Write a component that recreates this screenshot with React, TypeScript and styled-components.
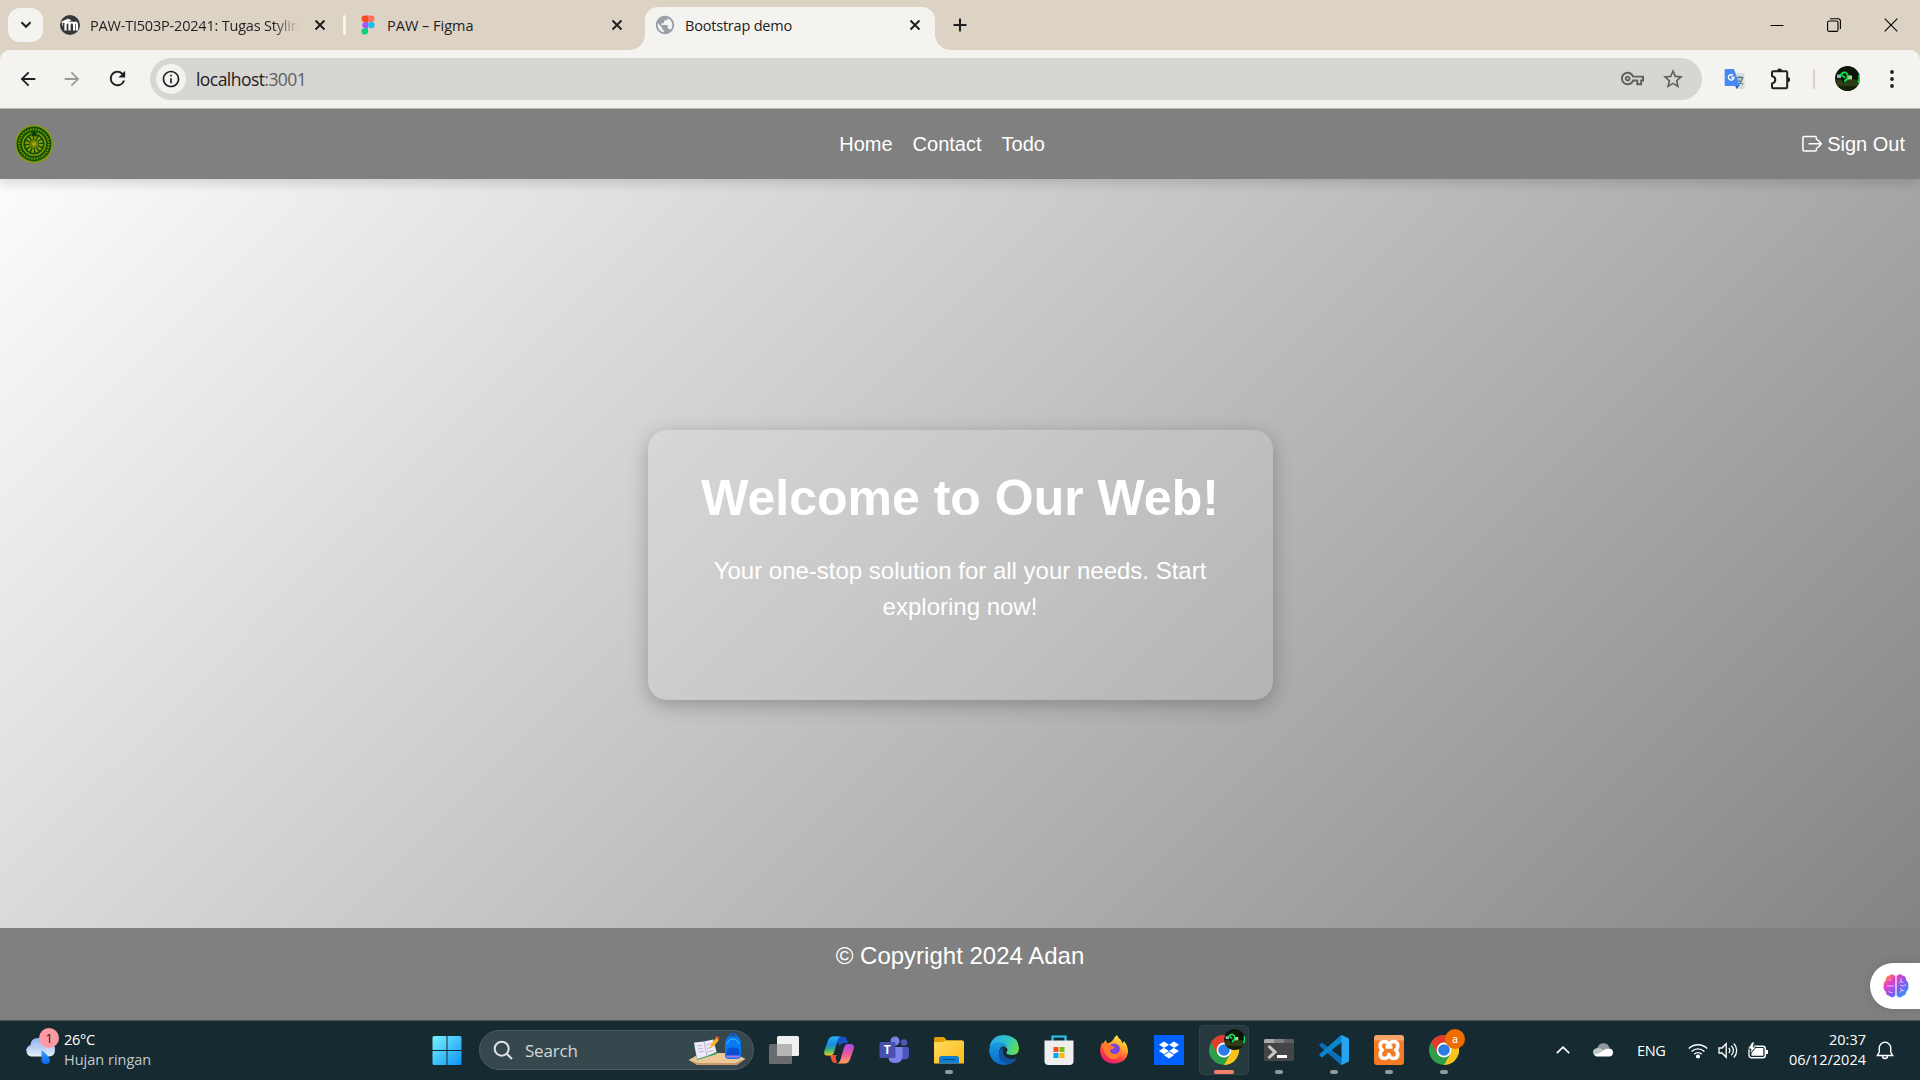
import React from "react";
import styled, { createGlobalStyle } from "styled-components";
import {
  MdArrowBack,
  MdArrowForward,
  MdRefresh,
  MdInfoOutline,
  MdStarOutline,
  MdPublic,
  MdOutlineVpnKey,
} from "react-icons/md";
import { FaDropbox } from "react-icons/fa";

const Global = createGlobalStyle`
  *, *::before, *::after { box-sizing: border-box; }
  body { margin: 0; overflow: hidden; }
  svg { display: block; flex: none; }
`;

const uiFont = `"Segoe UI", "Open Sans", "Noto Sans", sans-serif`;
const pageFont = `Arial, "Liberation Sans", sans-serif`;

const Screen = styled.div`
  width: 1920px;
  height: 1080px;
  display: flex;
  flex-direction: column;
  overflow: hidden;
  background: #ddd3c4;
`;

/* ---------- browser tabs ---------- */
const TabStrip = styled.header`
  height: 50px;
  flex: none;
  display: flex;
  font-family: ${uiFont};
  color: #1f2023;
`;
const TabSearch = styled.button`
  width: 35px;
  height: 34px;
  margin: 8px 2px 0 8px;
  padding: 0;
  border: 0;
  border-radius: 12px;
  background: #f5f3ef;
  display: grid;
  place-items: center;
`;
const Tab = styled.div<{
  $width: number;
  $left: number;
  $right: number;
  $gap: number;
  $active?: boolean;
}>`
  position: relative;
  width: ${(p) => p.$width}px;
  flex: none;
  height: 43px;
  margin-top: 7px;
  padding: 0 ${(p) => p.$right}px 7px ${(p) => p.$left}px;
  display: flex;
  align-items: center;
  gap: ${(p) => p.$gap}px;
  border-radius: 13px 13px 0 0;
  background: ${(p) => (p.$active ? "#f5f3ef" : "transparent")};
  &::before,
  &::after {
    content: "";
    display: ${(p) => (p.$active ? "block" : "none")};
    position: absolute;
    bottom: 0;
    width: 15px;
    height: 15px;
  }
  &::before {
    right: 100%;
    background: radial-gradient(circle at 0 0, transparent 14.5px, #f5f3ef 15px);
  }
  &::after {
    left: 100%;
    background: radial-gradient(circle at 100% 0, transparent 14.5px, #f5f3ef 15px);
  }
`;
const TabTitle = styled.span<{ $fade?: boolean; $spacing: number }>`
  flex: 1;
  overflow: hidden;
  white-space: nowrap;
  font-size: 14.5px;
  line-height: 20px;
  padding-top: 1px;
  letter-spacing: ${(p) => p.$spacing}px;
  ${(p) =>
    p.$fade &&
    "margin-right: 5px; mask-image: linear-gradient(90deg, #000 88%, transparent 100%);"}
`;
const TabDivider = styled.i`
  width: 3px;
  height: 20px;
  margin-top: 15px;
  margin-left: -2px;
  border-radius: 2px;
  background: #f5f3ef;
`;
const NewTab = styled.span`
  width: 50px;
  display: grid;
  place-items: center;
`;
const WindowControls = styled.div`
  margin-left: auto;
  margin-right: 1px;
  display: flex;
`;
const WindowButton = styled.span`
  width: 57px;
  height: 49px;
  display: grid;
  place-items: center;
`;

/* ---------- toolbar ---------- */
const Toolbar = styled.div`
  height: 59px;
  flex: none;
  display: flex;
  align-items: center;
  padding: 0 0 1px 10px;
  background: #f5f3ef;
  border-bottom: 1px solid #b7bfb3;
  border-radius: 10px 10px 0 0;
  color: #1f2023;
`;
const ToolButton = styled.span<{ $width: number; $muted?: boolean }>`
  width: ${(p) => p.$width}px;
  flex: none;
  display: grid;
  place-items: center;
  color: ${(p) => (p.$muted ? "#9b9a99" : "inherit")};
`;
const Omnibox = styled.div`
  width: 1552px;
  height: 42px;
  flex: none;
  margin-left: 14px;
  padding: 0 17px 0 6px;
  display: flex;
  align-items: center;
  border-radius: 21px;
  background: #d8d6d2;
  font-family: ${uiFont};
  color: #5f5f5f;
`;
const SiteInfo = styled.span`
  width: 30px;
  height: 30px;
  border-radius: 50%;
  background: #f5f3ef;
  color: #1f2023;
  display: grid;
  place-items: center;
`;
const Address = styled.span`
  flex: 1;
  margin-left: 10px;
  font-size: 17.5px;
  letter-spacing: -0.55px;
  color: #5f6064;
  b {
    font-weight: 400;
    color: #1f2023;
  }
`;
const OmniIcons = styled.span`
  display: flex;
  align-items: center;
  gap: 17px;
`;
const ToolDivider = styled.i`
  width: 2px;
  height: 20px;
  flex: none;
  margin: 0 20px 0 19px;
  background: #ddd3c4;
`;

/* ---------- web page ---------- */
const Page = styled.main`
  height: 911px;
  flex: none;
  display: flex;
  flex-direction: column;
  font-family: ${pageFont};
  color: #fff;
  position: relative;
  background: linear-gradient(135deg, #fff, #808080);
`;
const Navbar = styled.nav`
  height: 70px;
  flex: none;
  padding: 0 15px;
  display: flex;
  align-items: center;
  justify-content: space-between;
  background: #808080;
  box-shadow: 0 5px 10px rgba(0, 0, 0, 0.13);
  z-index: 1;
  font-size: 20px;
`;
const Brand = styled.a`
  width: 68px;
`;
const NavLinks = styled.div`
  display: flex;
  gap: 20px;
`;
const SignOut = styled.a`
  display: flex;
  align-items: center;
  gap: 5px;
`;
const Hero = styled.section`
  flex: 1;
  display: flex;
  align-items: center;
  justify-content: center;
  padding-top: 23px;
`;
const Card = styled.div`
  width: 625px;
  height: 270px;
  padding: 37.5px;
  border-radius: 19px;
  background: rgba(255, 255, 255, 0.1);
  box-shadow: 0 5px 19px rgba(0, 0, 0, 0.25);
  text-align: center;
`;
const Title = styled.h1`
  margin: 0 0 25px;
  font-size: 50px;
  line-height: 60px;
  white-space: nowrap;
`;
const Lead = styled.p`
  margin: 0;
  font-size: 24px;
  line-height: 36px;
`;
const Footer = styled.footer`
  height: 92px;
  flex: none;
  padding-top: 10px;
  text-align: center;
  font-size: 24px;
  line-height: 36px;
  background: #808080;
`;
const Assistant = styled.div`
  position: absolute;
  right: 0;
  bottom: 11px;
  width: 50px;
  height: 46px;
  padding-left: 13px;
  display: flex;
  align-items: center;
  border-radius: 23px 0 0 23px;
  background: #fff;
  box-shadow: 0 0 12px rgba(0, 0, 0, 0.12);
`;

/* ---------- taskbar ---------- */
const Taskbar = styled.footer`
  height: 60px;
  flex: none;
  display: flex;
  align-items: center;
  background: #152b31;
  box-shadow: inset 0 1px #43565a;
  font-family: ${uiFont};
  color: #fff;
`;
const Weather = styled.div`
  width: 422px;
  padding-left: 24px;
  display: flex;
  align-items: center;
  gap: 5px;
  font-size: 14.5px;
  line-height: 20px;
`;
const WeatherText = styled.div`
  letter-spacing: -0.3px;
  span {
    display: block;
  }
  span + span {
    color: #c3cacc;
    letter-spacing: 0;
  }
`;
const Apps = styled.div`
  display: flex;
  align-items: center;
  gap: 5px;
`;
const AppCell = styled.span<{ $active?: boolean }>`
  width: 50px;
  height: 50px;
  position: relative;
  display: grid;
  place-items: center;
  border-radius: 5px;
  background: ${(p) => (p.$active ? "#26393f" : "transparent")};
  box-shadow: ${(p) => (p.$active ? "inset 0 0 0 1px #31444a" : "none")};
`;
const Running = styled.i<{ $active?: boolean }>`
  position: absolute;
  bottom: 1px;
  left: 50%;
  width: ${(p) => (p.$active ? 20 : 8)}px;
  height: 4px;
  transform: translateX(-50%);
  border-radius: 2px;
  background: ${(p) => (p.$active ? "#f4836a" : "#8f9a9d")};
`;
const Search = styled.div`
  width: 275px;
  height: 40px;
  margin: 0 0 0 2px;
  padding: 0 7px 0 13px;
  display: flex;
  align-items: center;
  border: 1px solid #4c5c61;
  border-radius: 20px;
  background: #36484e;
  font-size: 17px;
  letter-spacing: -0.2px;
  color: #d3d8d9;
  span {
    flex: 1;
    margin-left: 12px;
  }
`;
const Tray = styled.div`
  margin-left: auto;
  padding-right: 26px;
  display: flex;
  align-items: center;
  > svg:first-child {
    margin-right: 23px;
  }
`;
const Language = styled.span`
  width: 29px;
  margin: 0 22px 0 24px;
  font-size: 14.5px;
  letter-spacing: -0.3px;
`;
const TrayStatus = styled.span`
  display: flex;
  gap: 10px;
`;
const Clock = styled.time`
  width: 98px;
  margin-right: 10px;
  text-align: right;
  font-size: 14.5px;
  line-height: 20px;
  span {
    display: block;
  }
`;

/* ---------- drawings ---------- */
const Cross = () => (
  <svg width="12" height="12" viewBox="0 0 12 12">
    <path d="M1.500 1.500l9 9M10.500 1.500l-9 9" stroke="#1f2023" strokeWidth="2" />
  </svg>
);
const MoodleIcon = () => (
  <svg width="20" height="20" viewBox="0 0 20 20">
    <circle cx="10" cy="10" r="10" fill="#373738" />
    <path d="M5.500 15.500V10q0-2.500 2-2.500t2 2.500v5.500M9.500 10q0-2.500 2.300-2.500t2.300 2.500v5.500M14 10q0-2.500 1.500-2.500t1.500 2.500v5.500" fill="none" stroke="#fff" strokeWidth="2.200" />
    <path d="M1.500 7L8 4l3 1.500L5 8zM2.500 7v4" fill="#fff" stroke="#fff" strokeWidth=".7" />
  </svg>
);
const FigmaIcon = () => (
  <svg width="14" height="20" viewBox="0 0 14 20">
    <path d="M7 .5H3.700a3.200 3.200 0 000 6.400H7z" fill="#f24e1e" />
    <path d="M7 .5h3.300a3.200 3.200 0 010 6.400H7z" fill="#ff7262" />
    <path d="M7 6.900H3.700a3.200 3.200 0 000 6.300H7z" fill="#a259ff" />
    <circle cx="10.300" cy="10" r="3.200" fill="#1abcfe" />
    <path d="M3.700 13.200H7v3.100a3.300 3.200 0 11-3.300-3.100z" fill="#0acf83" />
  </svg>
);
const TranslateIcon = () => (
  <svg width="22" height="22" viewBox="0 0 22 22">
    <path d="M8 5h12.500v16H12z" fill="#dcdcdc" />
    <path d="M12.500 9.500h7M16 8v1.500M18.500 9.500q-1 5-5 7.500M14.500 11.500q1.500 3.500 4.500 5" stroke="#5d7f8a" strokeWidth="1.300" fill="none" />
    <path d="M11 17h5l-3.500 4z" fill="#2557c9" />
    <path d="M1.500 1H10l5.800 17H1.500Q.7 18 .7 17V2Q.7 1 1.500 1z" fill="#4688f4" />
    <path d="M9 7.400A2.700 2.700 0 109.800 9.600H7.300" fill="none" stroke="#fff" strokeWidth="1.500" />
  </svg>
);
const ExtensionIcon = () => (
  <svg width="22" height="22" viewBox="0 0 22 22">
    <path d="M2 4.500Q2 3.200 3.300 3.200H16q1.200 0 1.200 1.300V19q0 1.300-1.200 1.300H3.300Q2 20.300 2 19v-3.400q3.300-.8 3.300-3.800T2 8z" fill="none" stroke="#1f2023" strokeWidth="2" />
    <path d="M7 3a2.600 2.600 0 015.200 0zM17.500 9a2.600 2.600 0 010 5.200z" fill="#1f2023" />
  </svg>
);
const Avatar = ({ size }: { size: number }) => (
  <svg width={size} height={size} viewBox="0 0 25 25">
    <circle cx="12.500" cy="12.500" r="12.500" fill="#0d1409" />
    <path d="M1 13.500h23a12 12 0 01-2 7H3a12 12 0 01-2-7z" fill="#2f3d16" />
    <path d="M3 20.500h19a12.500 12.500 0 01-19 0z" fill="#12200c" />
    <path d="M2 8.500h4v3.500H2z" fill="#8fb6cf" />
    <path d="M12 9.500h5v4h-5z" fill="#b8d28e" />
    <path d="M5.500 10q1-4 5-3.500 3 1.500 2 5t-4 3.500M7 9.500l3 2M24 9q1 4-.5 8" fill="none" stroke="#0ee04d" strokeWidth="1.900" />
    <path d="M6.500 13l2 4.500 1-4.500z" fill="#020502" />
  </svg>
);
const Seal = () => (
  <svg width="38" height="38" viewBox="0 0 38 38">
    <circle cx="19" cy="19" r="18.200" fill="#0b4f07" stroke="#8c9a08" strokeWidth="1.500" />
    <circle cx="19" cy="19" r="14.700" fill="none" stroke="#7f9206" strokeWidth="2.200" strokeDasharray="1.500 1.200" />
    <circle cx="19" cy="19" r="11.300" fill="none" stroke="#8c9a08" strokeWidth="1.400" />
    <circle cx="19" cy="19" r="6.800" fill="none" stroke="#8c9a08" strokeWidth="4.200" strokeDasharray="2.200 1.360" />
    <circle cx="19" cy="19" r="4.300" fill="#6e8408" />
    <circle cx="19" cy="19" r="2" fill="#a8a512" />
    <path d="M19 5l1.200 2.400 2.400.2-1.800 1.700.5 2.400-2.300-1.200-2.300 1.200.5-2.400-1.800-1.700 2.400-.2z" fill="#043d03" />
  </svg>
);
const SignOutIcon = () => (
  <svg width="21" height="18" viewBox="0 0 21 18" fill="none" stroke="#fff" strokeWidth="1.500">
    <path d="M15.500 5V3q0-1.600-1.600-1.600H3.300Q1.900 1.400 1.900 3v11.500q0 1.600 1.400 1.600h10.600q1.600 0 1.600-1.600v-2" />
    <path d="M7.500 8.800h13M16.300 4.600L20.500 8.800 16.300 13" />
  </svg>
);
const Brain = () => (
  <svg width="26" height="26" viewBox="0 0 26 26">
    <defs>
      <linearGradient id="brain" x1="0" y1="0" x2="1" y2="1">
        <stop offset=".05" stopColor="#ff9a2e" />
        <stop offset=".3" stopColor="#e83fc0" />
        <stop offset=".6" stopColor="#7b5cf2" />
        <stop offset="1" stopColor="#19b2f5" />
      </linearGradient>
    </defs>
    <path d="M12.400 3q-3-3-5.900-.5Q2.500 3 3 7-.2 9.500.8 13-.3 16 2.700 18.500 3 22.500 6.500 23q3 3 5.900-.5zM13.600 3q3-3 5.900-.5Q23.500 3 23 7q3.200 2.500 2.200 6 1.100 3-1.900 5.500-.3 4-3.800 4.500-3 3-5.900-.5z" fill="url(#brain)" />
    <path d="M4 13h7M6 7q1.500 1 2.500-.5M5.500 18q1 2 4 1.500M18 5.500v3l-2 1.500M18 8.500l2.500 1M23 11.500l-3 1.500-3-1M17 19.500l1.500-2.500M18.500 17l2.500 1M18.500 17l-1-2" stroke="#f6c4ff" strokeWidth=".9" fill="none" />
  </svg>
);
const WeatherIcon = () => (
  <svg width="35" height="34" viewBox="0 0 35 34">
    <defs>
      <linearGradient id="cloud" x1="0" y1="0" x2="0" y2="1">
        <stop stopColor="#8fb2ee" />
        <stop offset="1" stopColor="#e6eefb" />
      </linearGradient>
      <linearGradient id="drop" x1="0" y1="0" x2="0" y2="1">
        <stop stopColor="#3aa3ff" />
        <stop offset="1" stopColor="#0b63e8" />
      </linearGradient>
    </defs>
    <path d="M7 23.500a6 6 0 01-.5-11.500Q7 5 14 5q6 0 9 5 8-1 8 6.500 0 7-6 7z" fill="url(#cloud)" />
    <path d="M2 17q5-6 10-1 4-4 8 0" fill="none" stroke="#b4c9f0" />
    <path d="M17.500 17q8 6 8.500 10.500a4.300 4.300 0 01-8.500 0z" fill="url(#drop)" />
    <circle cx="25" cy="5" r="10" fill="#ff99a4" />
    <text x="25" y="10" textAnchor="middle" fontFamily="Open Sans" fontSize="13.500" fill="#1b1b1b">1</text>
  </svg>
);
const WeatherArt = styled.span`
  svg {
    overflow: visible;
  }
`;
const StartIcon = () => (
  <svg width="30" height="30" viewBox="0 0 30 30">
    <defs>
      <linearGradient id="win" x1="0" y1="0" x2="30" y2="30" gradientUnits="userSpaceOnUse">
        <stop stopColor="#7df4ff" />
        <stop offset="1" stopColor="#0a93f8" />
      </linearGradient>
    </defs>
    <path d="M2 1h12.500v14H.5V2.500Q.5 1 2 1zM15.500 1H28q1.500 0 1.500 1.500V15h-14zM.5 16h14v14H2Q.5 30 .5 28.500zM15.500 16h14v12.500q0 1.500-1.500 1.500H15.500z" fill="url(#win)" />
  </svg>
);
const SearchIcon = () => (
  <svg width="20" height="20" viewBox="0 0 20 20" fill="none" stroke="#dfe3e4" strokeWidth="2">
    <circle cx="8.700" cy="8.700" r="7" />
    <path d="M13.500 13.500L19 19" />
  </svg>
);
const StudyArt = () => (
  <svg width="58" height="34" viewBox="0 0 58 34">
    <path d="M.5 27L13 20h33l11.500 6-10 5H9z" fill="#edc795" />
    <path d="M.5 27L10 30h37l10.500-4L49 32H9z" fill="#c79a68" />
    <path d="M6 12l20-5 3 14-20 6z" fill="#2e9e54" />
    <path d="M6 9.500l10-1 3 14.500-10 3zM16 8.500l9-2 3.500 12.500-9.500 4z" fill="#eee8fb" />
    <path d="M9 13l5-.8M10 16l5-.8M11 19l5-.8M18 12l5-1.500M19 15.500l5-1.500M19.500 19l6-1.500M16 8.500l3 14.500" stroke="#a79cc0" strokeWidth=".7" />
    <path d="M22 15l1-4 5-6 3 2-5 6z" fill="#f9b229" />
    <path d="M27.500 4.500l1-1.500 3 2-1.500 2z" fill="#f25b3d" />
    <path d="M41 5q0-4 4-4t4 4" fill="none" stroke="#0c61e8" strokeWidth="1.700" />
    <path d="M37 22V11q0-8 8-8t8 8v11q0 4-4 4h-8q-4 0-4-4z" fill="#087bf2" />
    <path d="M38.500 23v-4q0-4.500 6.500-4.500t6.500 4.500v4z" fill="#0650d0" />
    <path d="M39.500 11q1-5 5.500-5t5.500 5" stroke="#36c5ff" fill="none" />
    <path d="M38.500 22.500h13v2h-13z" fill="#b277f0" />
  </svg>
);
const TaskViewIcon = () => (
  <svg width="30" height="30" viewBox="0 0 30 30">
    <rect x="0" y="9" width="23" height="20" rx="1.500" fill="#686c6e" />
    <rect x="8" y="1" width="22" height="20" rx="1.500" fill="#f0f0f0" />
    <path d="M8 9h15v12H9.500Q8 21 8 19.500z" fill="#b4b6b7" />
  </svg>
);
const CopilotIcon = () => (
  <svg width="30" height="30" viewBox="0 0 30 30">
    <defs>
      <linearGradient id="cpA" x1="0" y1="0" x2="0" y2="1">
        <stop stopColor="#2ab4f5" />
        <stop offset=".45" stopColor="#1788e0" />
        <stop offset=".75" stopColor="#4cb86a" />
        <stop offset="1" stopColor="#f4cd16" />
      </linearGradient>
      <linearGradient id="cpB" x1="0" y1="0" x2="0" y2="1">
        <stop stopColor="#a64cf0" />
        <stop offset=".5" stopColor="#f0559b" />
        <stop offset="1" stopColor="#ffa25c" />
      </linearGradient>
    </defs>
    <path d="M9 1.500h10q3 0 4 4L24 8h-4q-3 0-4 3z" fill="#1750c8" />
    <path d="M6 20h7q-2 1-1 4.500L13 28h-2q-2.500 0-3.500-3z" fill="#f0542d" />
    <path d="M9 1.500h8q-2.500.5-3.500 4l-3.500 12q-1 3-4 3H3.500Q-1 20.500.5 15.500L4 5.500q1.500-4 5-4z" fill="url(#cpA)" />
    <path d="M21 28.500h-8q2.500-.5 3.500-4l3.500-12q1-3.500 4-3.500h2.500q4.500 0 3 5.500L26 24.500q-1.500 4-5 4z" fill="url(#cpB)" />
  </svg>
);
const TeamsIcon = () => (
  <svg width="30" height="30" viewBox="0 0 30 30">
    <circle cx="25" cy="7.500" r="3.300" fill="#4c55bb" />
    <circle cx="16" cy="6" r="4.500" fill="#7b83eb" />
    <path d="M21 12h7.500q1.500 0 1.500 1.500V20q0 4.500-5 4.500-4 0-4-4z" fill="#4c55bb" />
    <path d="M10 12h13.500v9q0 7-7 7t-7-6z" fill="#7b83eb" />
    <rect x=".5" y="7" width="16" height="16" rx="1.500" fill="#4850b0" />
    <text x="8.300" y="19" textAnchor="middle" fontFamily="Open Sans" fontWeight="700" fontSize="12" fill="#fff">T</text>
  </svg>
);
const FolderIcon = () => (
  <svg width="30" height="30" viewBox="0 0 30 30">
    <defs>
      <linearGradient id="fold" x1="0" y1="0" x2="1" y2="1">
        <stop stopColor="#ffdb62" />
        <stop offset="1" stopColor="#fdb914" />
      </linearGradient>
    </defs>
    <path d="M0 3.500Q0 2 1.500 2H10l3 3.500h15V14H0z" fill="#e0a005" />
    <path d="M0 8q0-1 1-1h8l3-1.500h16.500Q30 5.500 30 7v21.500H0z" fill="url(#fold)" />
    <path d="M5 28.500v-5Q5 21 7.500 21h15q2.500 0 2.500 2.500v5z" fill="#1180d4" />
    <path d="M8.500 24.500h13" stroke="#0b4f92" strokeWidth="1.300" />
  </svg>
);
const EdgeIcon = () => (
  <svg width="30" height="30" viewBox="0 0 30 30">
    <defs>
      <linearGradient id="edA" x1="0" y1=".3" x2="1" y2=".6">
        <stop stopColor="#2aa9ec" />
        <stop offset=".55" stopColor="#2fc4c8" />
        <stop offset="1" stopColor="#66e04e" />
      </linearGradient>
      <linearGradient id="edB" x1="0" y1="0" x2="0" y2="1">
        <stop stopColor="#1b9de2" />
        <stop offset="1" stopColor="#0a66c9" />
      </linearGradient>
    </defs>
    <path d="M.5 12Q3 0 15 0q14.500 1 15 13 0 7-7 7-6 0-5.500-2.500Q20 14 16.500 12 9 8 .5 12z" fill="url(#edA)" />
    <path d="M0 14.500Q2 6.500 10.500 7q7 1 8 5-4-2.500-7 1-4 6 2 11.500 4 4 10 3Q20 30 15 30 1 29 0 14.500z" fill="url(#edB)" />
    <path d="M12.500 13Q7 20 12.500 26q4 3.500 9.500 2.500 4-1.500 6-5.500-6 2.500-11-.5-4.500-3.500-2.500-9z" fill="#12539f" />
  </svg>
);
const StoreIcon = () => (
  <svg width="30" height="30" viewBox="0 0 30 30">
    <path d="M8.500 7V1.500h13V7" fill="none" stroke="#2fc3f3" strokeWidth="2.200" />
    <path d="M.5 5.500h29V26q0 4-4 4h-21q-4 0-4-4z" fill="#efefef" />
    <path d="M9.500 12h5v5h-5z" fill="#f1511b" />
    <path d="M15.500 12h5v5h-5z" fill="#80b90b" />
    <path d="M9.500 18h5v5h-5z" fill="#05a3ee" />
    <path d="M15.500 18h5v5h-5z" fill="#fbb809" />
  </svg>
);
const FirefoxIcon = () => (
  <svg width="30" height="30" viewBox="0 0 30 30">
    <defs>
      <linearGradient id="ff" x1=".8" y1="0" x2=".3" y2="1">
        <stop stopColor="#fff04a" />
        <stop offset=".35" stopColor="#ffb02a" />
        <stop offset=".7" stopColor="#ff3f42" />
        <stop offset="1" stopColor="#e91c75" />
      </linearGradient>
    </defs>
    <path d="M18 0q1 3 4 5l1.500 3.500L25 6q4 5 4 10.500Q28 28 15 28.500 2 28 1 15.500 1 11 3.500 7L4 9l2.500-4 2 3.500Q12 8 14 5q1-3 4-5z" fill="url(#ff)" />
    <circle cx="15" cy="14.500" r="6" fill="#7a43dc" />
    <path d="M3 10q4-3 9 .5 3 1.500 4 1-1 3-5 3 0 4 4 4.500 6 0 6-6 3 5-1 9-5 4.500-11 0-5-5-6-12z" fill="#ff7a2d" />
  </svg>
);
const DropboxTile = styled.span`
  width: 30px;
  height: 30px;
  display: grid;
  place-items: center;
  background: #0061fe;
`;
const XamppTile = styled(DropboxTile)`
  border-radius: 3px;
  background: linear-gradient(#f7a468 0 5px, #f47a25 6px);
`;
const XamppMark = () => (
  <svg width="24" height="24" viewBox="0 0 24 24">
    <path
      d="M12 7.500Q11 3.500 7 3.500 3 4 3.200 8q.3 3 2.300 4-2 1-2.300 4 0 4.300 4 4.500 4 0 4.800-4 .8 4 4.800 4 4-.2 4-4.500-.3-3-2.300-4 2-1 2.300-4 .2-4-3.800-4.500-4 0-5 4z M8.500 9h7"
      fill="none"
      stroke="#fff"
      strokeWidth="3.600"
      strokeLinejoin="round"
    />
  </svg>
);
const ChromeIcon = ({ children }: { children?: React.ReactNode }) => (
  <svg width="30" height="30" viewBox="0 0 30 30" overflow="visible">
    <circle cx="15" cy="15" r="15" fill="#2d9f48" />
    <path d="M2 7.500A15 15 0 0128 7.500H15q-5 .5-6.500 4v7.300z" fill="#e33b2e" />
    <path d="M28 7.500A15 15 0 0115 30l6.500-11.300Q23.500 13 18 7.500z" fill="#fcc31e" />
    <circle cx="15" cy="15" r="7.400" fill="#fff" />
    <circle cx="15" cy="15" r="5.800" fill="#2a7de9" />
    {children}
  </svg>
);
const TerminalIcon = () => (
  <svg width="30" height="30" viewBox="0 0 30 30">
    <rect y="4" width="30" height="22" rx="1.500" fill="#444546" />
    <path d="M0 8V5.500Q0 4 1.500 4H20v4z" fill="#a8a9ab" />
    <path d="M10 4h10v4H10z" fill="#808183" />
    <path d="M20 4h8.500Q30 4 30 5.500V8H20z" fill="#5d5e60" />
    <path d="M4.500 11l6.500 6-6.500 6" fill="none" stroke="#c9c9c9" strokeWidth="3" />
    <path d="M13 21.500h10" stroke="#fff" strokeWidth="3" />
  </svg>
);
const CodeIcon = () => (
  <svg width="30" height="30" viewBox="0 0 30 30">
    <path d="M1 9l2-1.500 20 15.500v7q-1 0-1.500-.5L.7 11q-.8-1 .3-2z" fill="#0a6fb8" />
    <path d="M1 21l2 1.500L23 7V0q-1 0-1.500.5L.7 19q-.8 1 .3 2z" fill="#0a85cf" />
    <path d="M22.500 0L29 3q1 .5 1 1.500v21q0 1-1 1.500l-6.500 3z" fill="#25a5f1" />
  </svg>
);
const CloudIcon = () => (
  <svg width="20" height="14" viewBox="0 0 20 14">
    <path d="M4 5.500Q6 0 10.500.3 15.500.5 16.500 5L10 8z" fill="#8d989b" />
    <path d="M3 13Q0 12 0 9t4-4q4-.5 7 3l-7 5z" fill="#c2c8ca" />
    <path d="M3.500 13.500Q2 13 1.500 12q6-2 11-6 7-2 7.500 3 0 4.500-4 4.500z" fill="#fff" />
  </svg>
);
const WifiIcon = () => (
  <svg width="20" height="17" viewBox="0 0 20 17" fill="none" stroke="#fff" strokeWidth="1.400">
    <path d="M.8 6.600a13 13 0 0118.400 0M3.600 9.500a9 9 0 0112.800 0M6.300 12.200a5.200 5.200 0 017.400 0" />
    <circle cx="10" cy="14.500" r="1.400" fill="#fff" />
  </svg>
);
const SoundIcon = () => (
  <svg width="20" height="17" viewBox="0 0 20 17" fill="none" stroke="#fff" strokeWidth="1.300">
    <path d="M1 6h3l4.200-4.300v13.600L4 11H1zM10.800 6a3.500 3.500 0 010 5M13.300 3.700a6.500 6.500 0 010 9.600M15.800 1.500a10 10 0 010 14" />
  </svg>
);
const BatteryIcon = () => (
  <svg width="20" height="17" viewBox="0 0 20 17">
    <rect x="1" y="4.200" width="16.300" height="11.500" rx="2.500" fill="none" stroke="#fff" strokeWidth="1.400" />
    <path d="M3.500 13.800V11l4-5h7.800v7.800zM18 8h2v4h-2z" fill="#fff" />
    <path d="M4 0L0 7h3l-1 5 6-7H5l1.500-5z" fill="#fff" stroke="#152b31" strokeWidth=".8" />
  </svg>
);
const BellIcon = () => (
  <svg width="18" height="20" viewBox="0 0 18 20" fill="none" stroke="#fff" strokeWidth="1.400">
    <path d="M3.300 8a5.700 5.700 0 0111.400 0v4l2 3.500H1.300l2-3.500zM6.500 16a2.500 2.500 0 005 0" />
  </svg>
);

export default function App() {
  return (
    <Screen>
      <Global />
      <TabStrip>
        <TabSearch>
          <svg width="12" height="8" viewBox="0 0 12 8">
            <path d="M1.500 1.300L6 5.800l4.500-4.500" fill="none" stroke="#1f2023" strokeWidth="2.100" />
          </svg>
        </TabSearch>
        <Tab $width={300} $left={15} $right={19} $gap={10}>
          <MoodleIcon />
          <TabTitle $fade $spacing={-0.2}>PAW-TI503P-20241: Tugas Stylin</TabTitle>
          <Cross />
        </Tab>
        <TabDivider />
        <Tab $width={299} $left={15} $right={22} $gap={12}>
          <FigmaIcon />
          <TabTitle $spacing={0}>PAW – Figma</TabTitle>
          <Cross />
        </Tab>
        <Tab $width={290} $left={9} $right={14} $gap={9} $active>
          <MdPublic size={22} color="#9aa0a8" />
          <TabTitle $spacing={-0.2}>Bootstrap demo</TabTitle>
          <Cross />
        </Tab>
        <NewTab>
          <svg width="14" height="14" viewBox="0 0 14 14">
            <path d="M7 .5v13M.5 7h13" stroke="#1f2023" strokeWidth="2" />
          </svg>
        </NewTab>
        <WindowControls>
          <WindowButton>
            <svg width="14" height="14" viewBox="0 0 14 14">
              <path d="M.5 7.500h13" stroke="#000" />
            </svg>
          </WindowButton>
          <WindowButton>
            <svg width="14" height="14" viewBox="0 0 14 14" fill="none" stroke="#000" strokeWidth="1.100">
              <rect x=".6" y="3" width="10.400" height="10.400" rx="1.500" />
              <path d="M3 .7h8q2.400 0 2.400 2.400V11" />
            </svg>
          </WindowButton>
          <WindowButton>
            <svg width="14" height="14" viewBox="0 0 14 14">
              <path d="M.7.7l12.600 12.600M13.300.7L.7 13.300" stroke="#000" strokeWidth="1.100" />
            </svg>
          </WindowButton>
        </WindowControls>
      </TabStrip>

      <Toolbar>
        <ToolButton $width={35}><MdArrowBack size={22} /></ToolButton>
        <ToolButton $width={54} $muted><MdArrowForward size={22} /></ToolButton>
        <ToolButton $width={37}><MdRefresh size={23} /></ToolButton>
        <Omnibox>
          <SiteInfo><MdInfoOutline size={20} /></SiteInfo>
          <Address><b>localhost</b>:3001</Address>
          <OmniIcons>
            <MdOutlineVpnKey size={23} />
            <MdStarOutline size={24} />
          </OmniIcons>
        </Omnibox>
        <ToolButton $width={66}><TranslateIcon /></ToolButton>
        <ToolButton $width={26}><ExtensionIcon /></ToolButton>
        <ToolDivider />
        <Avatar size={25} />
        <ToolButton $width={64}>
          <svg width="4" height="20" viewBox="0 0 4 20" fill="#1f2023">
            <circle cx="2" cy="3" r="1.900" />
            <circle cx="2" cy="10" r="1.900" />
            <circle cx="2" cy="17" r="1.900" />
          </svg>
        </ToolButton>
      </Toolbar>

      <Page>
        <Navbar>
          <Brand><Seal /></Brand>
          <NavLinks>
            <a>Home</a>
            <a>Contact</a>
            <a>Todo</a>
          </NavLinks>
          <SignOut><SignOutIcon />Sign Out</SignOut>
        </Navbar>
        <Hero>
          <Card>
            <Title>Welcome to Our Web!</Title>
            <Lead>Your one-stop solution for all your needs. Start exploring now!</Lead>
          </Card>
        </Hero>
        <Footer>© Copyright 2024 Adan</Footer>
        <Assistant><Brain /></Assistant>
      </Page>

      <Taskbar>
        <Weather>
          <WeatherArt><WeatherIcon /></WeatherArt>
          <WeatherText>
            <span>26°C</span>
            <span>Hujan ringan</span>
          </WeatherText>
        </Weather>
        <Apps>
          <AppCell><StartIcon /></AppCell>
          <Search>
            <SearchIcon />
            <span>Search</span>
            <StudyArt />
          </Search>
          <AppCell><TaskViewIcon /></AppCell>
          <AppCell><CopilotIcon /></AppCell>
          <AppCell><TeamsIcon /></AppCell>
          <AppCell><FolderIcon /><Running /></AppCell>
          <AppCell><EdgeIcon /></AppCell>
          <AppCell><StoreIcon /></AppCell>
          <AppCell><FirefoxIcon /></AppCell>
          <AppCell><DropboxTile><FaDropbox size={20} color="#fff" /></DropboxTile></AppCell>
          <AppCell $active>
            <ChromeIcon>
              <svg x="15" y="-6" width="21" height="21"><Avatar size={21} /></svg>
            </ChromeIcon>
            <Running $active />
          </AppCell>
          <AppCell><TerminalIcon /><Running /></AppCell>
          <AppCell><CodeIcon /><Running /></AppCell>
          <AppCell><XamppTile><XamppMark /></XamppTile><Running /></AppCell>
          <AppCell>
            <ChromeIcon>
              <circle cx="26" cy="4" r="10" fill="#ef6c00" />
              <text x="26" y="8" textAnchor="middle" fontFamily="Roboto" fontSize="11" fill="#fff">a</text>
            </ChromeIcon>
            <Running />
          </AppCell>
        </Apps>
        <Tray>
          <svg width="14" height="8" viewBox="0 0 14 8">
            <path d="M.8 7.200L7 1.200l6.200 6" fill="none" stroke="#fff" strokeWidth="1.700" />
          </svg>
          <CloudIcon />
          <Language>ENG</Language>
          <TrayStatus>
            <WifiIcon />
            <SoundIcon />
            <BatteryIcon />
          </TrayStatus>
          <Clock>
            <span>20:37</span>
            <span>06/12/2024</span>
          </Clock>
          <BellIcon />
        </Tray>
      </Taskbar>
    </Screen>
  );
}
